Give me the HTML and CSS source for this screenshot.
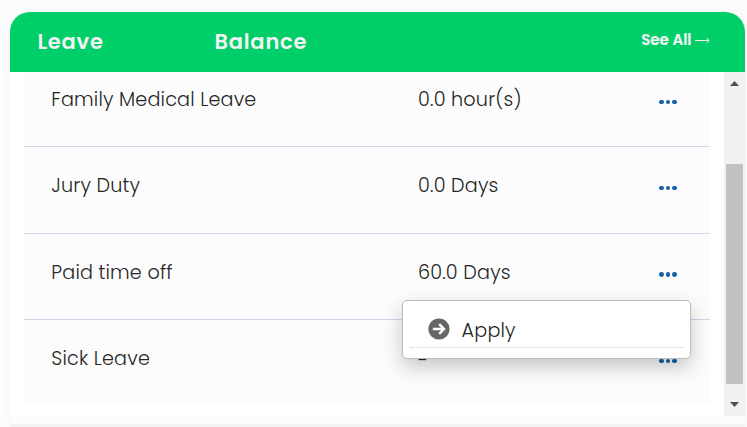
FILE: index.html
```html
<!DOCTYPE html>
<html lang="en">
<head>
<meta charset="utf-8">
<title>Leave balance</title>
<link rel="stylesheet" href="styles.css">
</head>
<body>
<section class="card">
  <header class="head">
    <h2>Leave</h2>
    <h2>Balance</h2>
    <a class="see-all"><span>See All</span>
      <svg width="15" height="8" viewBox="0 0 15 8"><path d="M0 4.5H14M11.5 2L14.2 4.5L11.5 7" fill="none" stroke="currentColor"/></svg>
    </a>
  </header>
  <div class="body">
    <div class="list">
      <div class="row first"><span class="name">Family Medical Leave</span><span>0.0 hour(s)</span><span class="dots"><i></i><i></i><i></i></span></div>
      <div class="row"><span class="name">Jury Duty</span><span>0.0 Days</span><span class="dots"><i></i><i></i><i></i></span></div>
      <div class="row anchor"><span class="name">Paid time off</span><span>60.0 Days</span><span class="dots"><i></i><i></i><i></i></span>
        <div class="menu">
          <div class="item">
            <svg width="22" height="22" viewBox="0 0 22 22"><circle cx="11" cy="11" r="10.6" fill="#666"/><path d="M4.9 11H15.4M11.2 6.2L16 11L11.2 15.8" fill="none" stroke="#fff" stroke-width="2.4"/></svg>
            <span>Apply</span>
          </div>
        </div>
      </div>
      <div class="row last"><span class="name">Sick Leave</span><span class="dash">-</span><span class="dots"><i></i><i></i><i></i></span></div>
    </div>
    <div class="scrollbar">
      <svg width="9" height="5" viewBox="0 0 9 5"><path d="M0 5L4.5 0L9 5Z" fill="#505050"/></svg>
      <div class="thumb"></div>
      <svg width="9" height="5" viewBox="0 0 9 5"><path d="M0 0L4.5 5L9 0Z" fill="#505050"/></svg>
    </div>
  </div>
</section>
</body>
</html>
```
FILE: styles.css
```css
* { box-sizing: border-box; }
body {
  margin: 0;
  height: 427px;
  padding: 12px 2px 0 10px;
  overflow: hidden;
  background: #fcfcfc;
  font-family: Poppins, Inter, sans-serif;
  color: #252525;
}
.card {
  height: 412px;
  border-radius: 20px 20px 0 0;
  background: #fcfcfc;
  box-shadow: 0 0 10px rgba(0, 0, 0, .035), 0 3px 0 #f5f5f5;
}
.head {
  display: flex;
  height: 60px;
  padding: 0 35px 0 27.4px;
  border-radius: 20px 20px 0 0;
  background: #00ce68;
  color: #f0f3f1;
}
h2 {
  margin: 0;
  width: 177px;
  font-size: 21px;
  font-weight: 600;
  line-height: 60px;
  letter-spacing: .8px;
}
.see-all {
  display: flex;
  align-items: center;
  gap: 3.5px;
  height: 56px;
  margin-left: auto;
  font-size: 15px;
  font-weight: 600;
  letter-spacing: 0;
}
.see-all span { margin-top: -2px; -webkit-text-stroke: .2px currentColor; }
.body {
  display: flex;
  height: 344px;
  background: #fff;
}
.list {
  width: 686px;
  height: 333px;
  margin: 0 14px;
  background: #fcfcfc;
}
.row {
  display: flex;
  height: 86.5px;
  padding: 22px 33px 0 27.3px;
  border-bottom: 1px solid #d0d8ea;
  font-size: 19.2px;
  font-weight: 300;
  line-height: 34px;
  letter-spacing: .17px;
}
.first { height: 75px; padding-top: 11px; }
.last { height: 85px; border: 0; }
.anchor { position: relative; }
.name { width: 366.7px; }
.dash { padding-top: 2px; }
.dots {
  display: flex;
  gap: 1.8px;
  margin: 16.6px 0 0 auto;
}
.dots i {
  width: 4.8px;
  height: 4.8px;
  border-radius: 50%;
  background: #155fa8;
}
.menu {
  position: absolute;
  z-index: 1;
  top: 66px;
  left: 378px;
  width: 289px;
  height: 59px;
  padding: 8px 7px;
  border: 1px solid #bbb;
  border-radius: 5px;
  background: #fff;
  box-shadow: 0 8px 20px rgba(0, 0, 0, .22);
}
.item {
  display: flex;
  align-items: center;
  gap: 11.2px;
  height: 39px;
  padding-left: 18.4px;
  border-bottom: 1px dotted #ccc;
}
.item span { padding-top: 6px; }
.item svg { margin-top: 3px; }
.scrollbar {
  display: flex;
  flex-direction: column;
  align-items: center;
  width: 21px;
  padding: 9px 0 9px;
  background: #f1f1f1;
}
.thumb {
  width: 17px;
  height: 220px;
  margin: 78px 0 18px;
  background: #c1c1c1;
}
```
